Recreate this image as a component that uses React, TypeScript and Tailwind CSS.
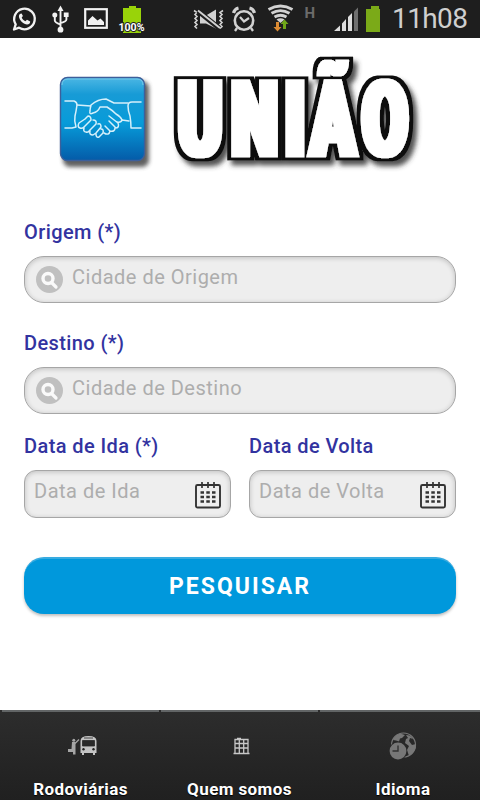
import React from "react";

function StatusBar() {
  return (
    <header className="flex h-[38px] w-full shrink-0 items-start bg-[#1e1e1e]">
      <svg width="380" height="38" viewBox="0 0 380 38" className="shrink-0">
        {/* WhatsApp */}
        <g fill="none" stroke="#f2f2f2" strokeWidth="2.3" strokeLinejoin="round">
          <path d="M14 29.5l1.7-5.2a10.3 10.3 0 1 1 3.4 3.4z" />
        </g>
        <path
          d="M20.5 13.8c-2 .8-2 3-.6 5.6 1.700 3 4.500 4.900 7 5 2 .1 3.300-1.200 3.300-3l-3.200-1.700-1.600 1.500c-1.800-.7-3-2-3.700-3.600l1.200-1.500-1.300-2.500z"
          fill="#f2f2f2"
        />
        {/* USB */}
        <g fill="none" stroke="#f2f2f2" strokeWidth="1.9">
          <path d="M60.500 9v20M54.800 17v3.500q0 2 5.700 4.200M66.400 16v3.500q0 2-5.900 3.700" />
        </g>
        <path d="M60.500 5.500l3 5.500h-6z" fill="#f2f2f2" />
        <circle cx="60.500" cy="29.700" r="2.900" fill="#f2f2f2" />
        <circle cx="54.800" cy="15" r="2.500" fill="#f2f2f2" />
        <rect x="63.800" y="12.500" width="4.800" height="4.500" fill="#f2f2f2" />
        {/* Picture */}
        <rect x="85.200" y="9.200" width="21.600" height="18.600" fill="none" stroke="#f2f2f2" strokeWidth="2.200" />
        <path d="M88 25v-4.500l4.500-4.500 5 4.500 3-2 3.500 3.500v3z" fill="#f2f2f2" />
        {/* Battery level */}
        <path d="M123 8h6V6h7v2h5v25h-18z" fill="#99d309" />
        <text
          x="118.500"
          y="30.800"
          textLength="26"
          lengthAdjust="spacingAndGlyphs"
          className="font-['Roboto',sans-serif] text-[10px] font-bold"
          fill="#fff"
          stroke="#222"
          strokeWidth="2"
          paintOrder="stroke"
        >
          100%
        </text>
        {/* Muted speaker */}
        <g fill="none" stroke="#d2d2d2" strokeWidth="1.600">
          <path d="M194 10.500l3 2-2 2 2 2-2 2 2 2-2 2 2 2-2 2 2 2M223 10.500l-3 2 2 2-2 2 2 2-2 2 2 2-2 2 2 2-2 2" />
        </g>
        <path d="M200 15.500h6l10-6v19l-10-5h-6z" fill="#d2d2d2" />
        <path d="M198 11l21 17" stroke="#1e1e1e" strokeWidth="5" />
        <path d="M198 10.500l22 17.500" stroke="#d2d2d2" strokeWidth="1.900" />
        {/* Alarm */}
        <g fill="none" stroke="#d2d2d2">
          <circle cx="244" cy="20.500" r="9.200" strokeWidth="2.600" />
          <path d="M240 17l4 4.500 5-3.500" strokeWidth="2.200" />
          <path d="M233.500 13q1-4 5-5M254.500 13q-1-4-5-5" strokeWidth="3.200" />
          <path d="M237 28l-2 3M251 28l2 3" strokeWidth="2.300" />
        </g>
        {/* Wifi */}
        <g fill="none" stroke="#d2d2d2" strokeWidth="2.800">
          <path d="M268.500 9.500q12-7 24 0M271.500 13.300q9-5.500 18 0M274.500 17q6-3.500 12 0" />
        </g>
        <path d="M276.500 19.500q4-2.300 8 0l-4 3.500z" fill="#d2d2d2" />
        <path d="M276 22h3v5h2.500l-4 4.500-4-4.500h2.500z" fill="#dd8b32" />
        <path d="M283 29h3v-5h2.500l-4-4.500-4 4.500h2.500z" fill="#70a619" />
        <text x="304.500" y="17.500" className="font-['Roboto',sans-serif] text-[15px] font-bold" fill="#6b6b6b">
          H
        </text>
        {/* Signal */}
        <path d="M334 31l6-5.500V31zM342 23.500l4-4.500v12h-4zM348 17l4-4v18h-4z" fill="#dedede" />
        <path d="M354 11.500l4-4V31h-4z" fill="#6f6f6f" />
        <path d="M366 9h5V6h8v3h5v23h-18z" fill="#7baa18" />
      </svg>
      <span className="ml-[12px] mt-[1px] font-['Roboto',sans-serif] text-[28px] leading-[35px] font-normal tracking-[-0.6px] text-[#cfcfcf]">
        11h08
      </span>
    </header>
  );
}

function Logo() {
  return (
    <svg width="480" height="150" viewBox="0 38 480 150" className="block shrink-0">
      <defs>
        <linearGradient id="tile" x1="0" y1="0" x2="0" y2="1">
          <stop offset="0" stopColor="#4cb7e4" />
          <stop offset=".2" stopColor="#189bd6" />
          <stop offset=".55" stopColor="#079bd9" />
          <stop offset="1" stopColor="#045ba8" />
        </linearGradient>
        <filter id="soft" x="-20%" y="-20%" width="150%" height="150%">
          <feGaussianBlur stdDeviation="2" />
        </filter>
        <filter id="outline" filterUnits="userSpaceOnUse" x="160" y="40" width="280" height="140">
          <feMorphology in="SourceGraphic" operator="dilate" radius="3 0" result="face" />
          <feMorphology in="face" operator="dilate" radius="4 3" result="fat" />
          <feGaussianBlur in="fat" stdDeviation=".6" result="smooth" />
          <feFlood floodColor="#111" />
          <feComposite in2="smooth" operator="in" result="edge" />
          <feGaussianBlur in="fat" stdDeviation="2.500" />
          <feOffset dx="4" dy="5" result="shade" />
          <feFlood floodColor="#333" floodOpacity=".85" />
          <feComposite in2="shade" operator="in" result="shadow" />
          <feMerge>
            <feMergeNode in="shadow" />
            <feMergeNode in="edge" />
            <feMergeNode in="face" />
          </feMerge>
        </filter>
      </defs>
      <rect x="63" y="81" width="86" height="86" rx="7" fill="#444" opacity=".85" filter="url(#soft)" />
      <rect x="60.500" y="77.500" width="84" height="83" rx="7" fill="url(#tile)" stroke="#3d5f9b" strokeWidth="1.400" />
      <path d="M62 85q0-6 6-6h69q6 0 6 6" fill="none" stroke="#8dd3ee" strokeWidth="1" opacity=".7" />
      <g fill="none" stroke="#d5f0fb" strokeWidth="1.500" strokeLinecap="round" strokeLinejoin="round">
        <path d="M65 101h9q3 1 3 4-1 7-2 11-1 5 1 11l-4 1h-7" />
        <path d="M141 102h-9q-4 0-4 4 0 5 2 10 1 6 1 12h10" />
        <path d="M77 105l14 1M128 103l-14 0-8-4q-8 0-15 6-1 4-1 6-1 4 3 2 5-1 7-6h7q5 3 9 7 5 3 6 6" />
        <path d="M85 119l-6 4q-2 4 1 5 2 1 4-1l7-7q0-4-3-4l-3 3M84 128q-1 4 2 4 2 1 4-2l6-6q1-4-3-4M90 131q-1 4 3 4l3-2 5-6q0-4-3-3M96 134q0 4 3 3l4-4q1-4-2-4" />
        <path d="M104 133q5 3 6-2 5 1 5-3 5 0 3-5l-9-7M117 122q4 1 5-2l7 1M110 131l-5-5M115 127l-6-6" />
      </g>
      <g filter="url(#outline)">
        <text
          transform="scale(.62 1)"
          x="322.600 410.500 475.800 537 621"
          y="156.500"
          textAnchor="middle"
          className="font-['Roboto',sans-serif] text-[106px] font-black"
          fill="#fff"
          stroke="#fff"
          strokeWidth="2.500"
        >
          UNIÃO
        </text>
      </g>
    </svg>
  );
}

const LABEL =
  "block font-['Roboto',sans-serif] text-[20px] leading-[24px] font-medium tracking-[0.4px] text-[#3233a0] whitespace-nowrap";
const INPUT =
  "min-w-0 flex-1 bg-transparent font-['Roboto',sans-serif] text-[20px] leading-[24px] tracking-[0.5px] text-[#555] placeholder:text-[#adadad] placeholder:opacity-100 outline-none";
const BOX =
  "flex items-start border border-[#a6a6a6] bg-[#eee] shadow-[inset_0_1px_5px_rgba(0,0,0,0.2)]";

function SearchField({ id, label, hint }: { id: string; label: string; hint: string }) {
  return (
    <div>
      <label htmlFor={id} className={LABEL}>{label}</label>
      <div className={`mt-[12px] h-[47px] rounded-[20px] pl-[11px] ${BOX}`}>
        <svg width="28" height="28" viewBox="0 0 28 28" className="mt-[9px] mr-[8px] shrink-0">
          <circle cx="13.500" cy="13.500" r="13.500" fill="#c0c0c0" />
          <circle cx="12" cy="12.500" r="5" fill="none" stroke="#fafafa" strokeWidth="3.400" />
          <path d="M15.500 16.500l4.500 4.500" stroke="#fafafa" strokeWidth="3.200" strokeLinecap="round" />
        </svg>
        <input id={id} placeholder={hint} className={`mt-[8px] ${INPUT}`} />
      </div>
    </div>
  );
}

function DateField({ id, label, hint }: { id: string; label: string; hint: string }) {
  return (
    <div className="w-[207px]">
      <label htmlFor={id} className={LABEL}>{label}</label>
      <div className={`mt-[12px] h-[48px] rounded-[12px] pr-[9px] pl-[9px] ${BOX}`}>
        <input id={id} placeholder={hint} className={`mt-[8px] ${INPUT}`} />
        <svg width="26" height="27" viewBox="0 0 26 27" className="mt-[11px] shrink-0">
          <rect x="1" y="3" width="24" height="22.500" rx="1.500" fill="none" stroke="#333" strokeWidth="1.900" />
          <path d="M7 0v6M13 0v6M19 0v6" stroke="#333" strokeWidth="1.700" />
          <path
            d="M5.500 10.500h3.500M11.300 10.500h3.500M17 10.500h3.500M5.500 15h3.500M11.300 15h3.500M17 15h3.500M5.500 19.500h3.500M11.300 19.500h3.500M17 19.500h3.500"
            stroke="#333"
            strokeWidth="2.500"
          />
        </svg>
      </div>
    </div>
  );
}

function BusIcon() {
  return (
    <svg width="30" height="22" viewBox="0 0 30 22" className="ml-[2px]">
      <path d="M15 20v-2h-1.500V6q0-5 8-5t8 5v12H28v2h-2v-2h-9v2z" fill="#c4c4c4" />
      <path d="M17 3h9M15.500 5.500h12V11h-12z" fill="#2a2a2a" stroke="#2a2a2a" strokeWidth=".8" />
      <circle cx="16.500" cy="14.300" r="1.200" fill="#222" />
      <circle cx="26.500" cy="14.300" r="1.200" fill="#222" />
      <circle cx="6.800" cy="5.300" r="1.500" fill="#a5a5a5" />
      <path d="M5 7h3.500v12.500H6V17H1v-3h3.500z" fill="#a5a5a5" />
      <path d="M8 8.500l4-4" stroke="#a5a5a5" strokeWidth="1.200" />
    </svg>
  );
}

function BuildingIcon() {
  return (
    <svg width="17" height="18" viewBox="0 0 17 18" className="ml-[4px]">
      <path
        d="M2 16V2.500h13V16M6.300 2v14M10.700 2v14M2 6.500h13M2 11h13M.5 16.500h16M4 1.500h4"
        fill="none"
        stroke="#c7c7c7"
        strokeWidth="1.300"
      />
    </svg>
  );
}

function GlobeClockIcon() {
  return (
    <svg width="28" height="28" viewBox="0 0 28 28">
      <circle cx="14.500" cy="13" r="12" fill="none" stroke="#777" strokeWidth="1.200" />
      <path
        d="M4 8q2-5 7-6.500l5 1.500-3 3-2 .5-1 3-3-1zM17 3q5 0 7 4l-3-1-1 3 3 4 4-1q0 8-7 12l-2-6 2-4-4-3 1-4 2-1z"
        fill="#777"
      />
      <circle cx="9" cy="19" r="9.200" fill="#292929" />
      <circle cx="9" cy="19" r="8.400" fill="#777" />
      <path d="M9 13.500V19H3.500" fill="none" stroke="#333" strokeWidth="1.400" />
    </svg>
  );
}

function Tab({ label, className, children }: { label: string; className: string; children: React.ReactNode }) {
  return (
    <button className={`flex min-w-0 flex-col items-center border-t-2 border-[#626566] ${className}`}>
      <span className="flex h-[67px] items-center justify-center">{children}</span>
      <span className="font-['Roboto',sans-serif] text-[17px] leading-[20px] font-bold tracking-[0.4px] whitespace-nowrap text-white [text-shadow:0_1px_1px_#000]">
        {label}
      </span>
    </button>
  );
}

export default function App() {
  return (
    <div className="flex h-[800px] w-[480px] flex-col overflow-hidden bg-white">
      <StatusBar />
      <Logo />
      <main className="flex flex-1 flex-col px-[24px] pt-[32px]">
        <SearchField id="origem" label="Origem (*)" hint="Cidade de Origem" />
        <div className="mt-[28px]">
          <SearchField id="destino" label="Destino (*)" hint="Cidade de Destino" />
        </div>
        <div className="mt-[20px] flex justify-between">
          <DateField id="ida" label="Data de Ida (*)" hint="Data de Ida" />
          <DateField id="volta" label="Data de Volta" hint="Data de Volta" />
        </div>
        <button className="mt-[39px] h-[57px] w-full rounded-[20px] border-t-2 border-[#38abe0] bg-[#0098dc] pt-[1px] font-['Roboto',sans-serif] text-[23px] font-bold tracking-[2px] text-white shadow-[0_2px_3px_rgba(0,0,0,0.25)]">
          PESQUISAR
        </button>
      </main>
      <nav className="flex h-[90px] shrink-0 gap-[2px] bg-linear-to-b from-[#2d2d2d] to-[#202020] pl-[2px]">
        <Tab label="Rodoviárias" className="w-[157px]"><BusIcon /></Tab>
        <Tab label="Quem somos" className="w-[157px]"><BuildingIcon /></Tab>
        <Tab label="Idioma" className="flex-1 pl-[6px]"><GlobeClockIcon /></Tab>
      </nav>
    </div>
  );
}
